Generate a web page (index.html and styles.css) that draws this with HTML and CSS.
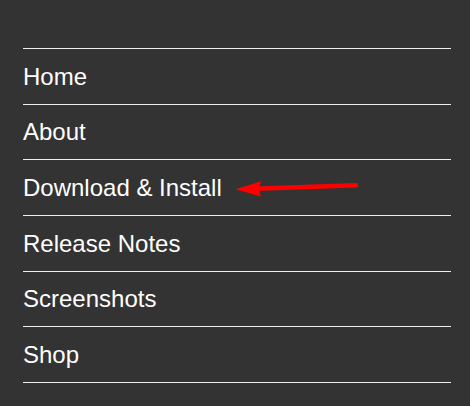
FILE: index.html
```html
<!DOCTYPE html>
<html>
<head>
<meta charset="utf-8">
<link rel="stylesheet" href="styles.css">
</head>
<body>
<nav class="menu">
  <ul class="menu-list">
    <li class="menu-item"><a href="#">Home</a></li>
    <li class="menu-item"><a href="#">About</a></li>
    <li class="menu-item"><a href="#">Download &amp; Install</a></li>
    <li class="menu-item"><a href="#">Release Notes</a></li>
    <li class="menu-item"><a href="#">Screenshots</a></li>
    <li class="menu-item"><a href="#">Shop</a></li>
  </ul>
</nav>
<svg class="arrow" width="470" height="406" viewBox="0 0 470 406">
  <line x1="356" y1="185.3" x2="255" y2="188.8" stroke="#ff0000" stroke-width="4.5" stroke-linecap="round"/>
  <path d="M235.5 189.3 L261 181.2 Q258 189 261 196.6 Z" fill="#ff0000"/>
</svg>
</body>
</html>
```
FILE: styles.css
```css
html, body {
  margin: 0;
  padding: 0;
  background: #333333;
}
body {
  width: 470px;
  height: 406px;
  overflow: hidden;
  position: relative;
  font-family: "Liberation Sans", Arial, sans-serif;
}
.menu {
  padding: 48px 0 0 23px;
}
.menu-list {
  list-style: none;
  margin: 0;
  padding: 0;
  width: 428px;
  border-top: 1px solid #eeeeee;
}
.menu-item {
  border-bottom: 1px solid #eeeeee;
  padding: 13.7px 0 12.97px;
  font-size: 24px;
  line-height: 28px;
}
.menu-item a {
  color: #ffffff;
  text-decoration: none;
}
.arrow {
  position: absolute;
  left: 0;
  top: 0;
  pointer-events: none;
}
```
